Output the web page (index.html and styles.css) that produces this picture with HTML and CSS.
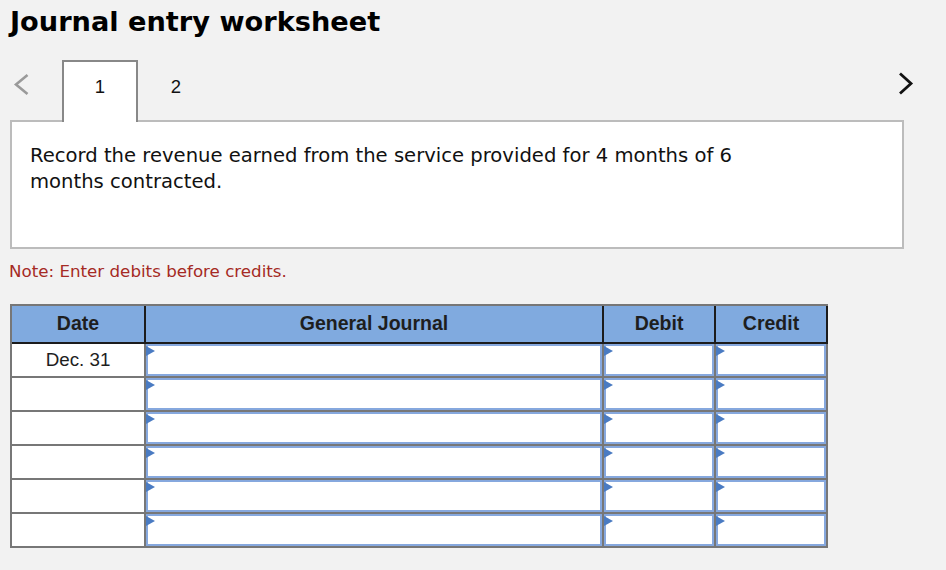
FILE: index.html
```html
<!DOCTYPE html>
<html>
<head>
<meta charset="utf-8">
<link rel="stylesheet" href="styles.css">
</head>
<body>
<main class="page">
  <h1 class="title">Journal entry worksheet</h1>
  <div class="tabrow">
    <svg class="chev chev-left" width="62" height="62" viewBox="0 0 62 62"><polyline points="27.5,15 16,24.5 27.5,34" fill="none" stroke="#9a9a9a" stroke-width="2.6"/></svg>
    <div class="tab active">1</div>
    <div class="tab">2</div>
    <svg class="chev chev-right" width="30" height="62" viewBox="0 0 30 62"><polyline points="10,13.5 21,23.5 10,33.5" fill="none" stroke="#111" stroke-width="2.8"/></svg>
  </div>
  <section class="prompt">
    <p class="prompt-text">Record the revenue earned from the service provided for 4 months of 6 months contracted.</p>
  </section>
  <p class="note">Note: Enter debits before credits.</p>
  <div class="journal">
    <div class="hcell">Date</div>
    <div class="hcell">General Journal</div>
    <div class="hcell">Debit</div>
    <div class="hcell hlast">Credit</div>

    <div class="dcell">Dec. 31</div>
    <div class="icell"><div class="inp"><span class="flag"></span></div></div>
    <div class="icell"><div class="inp"><span class="flag"></span></div></div>
    <div class="icell"><div class="inp"><span class="flag"></span></div></div>

    <div class="dcell"></div>
    <div class="icell"><div class="inp"><span class="flag"></span></div></div>
    <div class="icell"><div class="inp"><span class="flag"></span></div></div>
    <div class="icell"><div class="inp"><span class="flag"></span></div></div>

    <div class="dcell"></div>
    <div class="icell"><div class="inp"><span class="flag"></span></div></div>
    <div class="icell"><div class="inp"><span class="flag"></span></div></div>
    <div class="icell"><div class="inp"><span class="flag"></span></div></div>

    <div class="dcell"></div>
    <div class="icell"><div class="inp"><span class="flag"></span></div></div>
    <div class="icell"><div class="inp"><span class="flag"></span></div></div>
    <div class="icell"><div class="inp"><span class="flag"></span></div></div>

    <div class="dcell"></div>
    <div class="icell"><div class="inp"><span class="flag"></span></div></div>
    <div class="icell"><div class="inp"><span class="flag"></span></div></div>
    <div class="icell"><div class="inp"><span class="flag"></span></div></div>

    <div class="dcell"></div>
    <div class="icell"><div class="inp"><span class="flag"></span></div></div>
    <div class="icell"><div class="inp"><span class="flag"></span></div></div>
    <div class="icell"><div class="inp"><span class="flag"></span></div></div>
  </div>
</main>
</body>
</html>
```

FILE: styles.css
```css
html, body {
  margin: 0;
  padding: 0;
  background: #f2f2f2;
}
.page {
  padding: 0 10px;
  width: 946px;
  box-sizing: border-box;
}
.title {
  margin: 7px 0 0 0;
  height: 30px;
  line-height: 30px;
  font-family: "DejaVu Sans", Verdana, sans-serif;
  font-weight: bold;
  font-size: 27.2px;
  color: #000;
}
.tabrow {
  display: flex;
  margin: 23px -10px -2px -10px;
  height: 62px;
  position: relative;
  z-index: 2;
}
.chev {
  display: block;
  flex: none;
}
.chev-right {
  margin-left: auto;
  margin-right: 26px;
}
.tab {
  width: 76px;
  height: 62px;
  box-sizing: border-box;
  padding-top: 17px;
  text-align: center;
  font-family: "Liberation Sans", Arial, sans-serif;
  font-size: 18.5px;
  line-height: 20px;
  color: #111;
}
.tab.active {
  background: #fff;
  border: 2px solid #888;
  border-bottom: none;
  padding-top: 15px;
}
.prompt {
  width: 894px;
  height: 129px;
  box-sizing: border-box;
  border: 2px solid #bcbcbc;
  background: #fff;
  padding: 21px 0 0 18px;
}
.prompt-text {
  margin: 0;
  max-width: 745px;
  font-family: "DejaVu Sans", Verdana, sans-serif;
  font-size: 19.6px;
  line-height: 26px;
  color: #111;
}
.note {
  margin: 13px 0 0 -1px;
  height: 18px;
  font-family: "DejaVu Sans", Verdana, sans-serif;
  font-size: 16.7px;
  line-height: 18px;
  color: #a52a24;
}
.journal {
  margin-top: 24px;
  display: grid;
  grid-template-columns: 132px 456px 110px 110px;
  grid-template-rows: 36px repeat(6, 32px);
  gap: 2px;
  padding: 2px;
  width: 818px;
  box-sizing: border-box;
  background: #777;
}
.hcell {
  background: #80aadf;
  display: flex;
  align-items: center;
  justify-content: center;
  padding-bottom: 1px;
  font-family: "Liberation Sans", Arial, sans-serif;
  font-weight: bold;
  font-size: 19.5px;
  color: #1e1e1e;
  box-shadow: 2px 0 0 #1c1c1c, 0 2px 0 #1c1c1c, 2px 2px 0 #1c1c1c;
}
.dcell {
  background: #fff;
  display: flex;
  align-items: center;
  justify-content: center;
  font-family: "Liberation Sans", Arial, sans-serif;
  font-size: 18.8px;
  color: #1e1e1e;
}
.icell {
  background: #fff;
  display: flex;
}
.inp {
  flex: 1;
  position: relative;
  border: 2px solid #86a8de;
  background: #fff;
}
.flag {
  position: absolute;
  left: -2px;
  top: 0;
  width: 0;
  height: 0;
  border-top: 5px solid transparent;
  border-bottom: 5px solid transparent;
  border-left: 9px solid #4a7bc2;
}
```
